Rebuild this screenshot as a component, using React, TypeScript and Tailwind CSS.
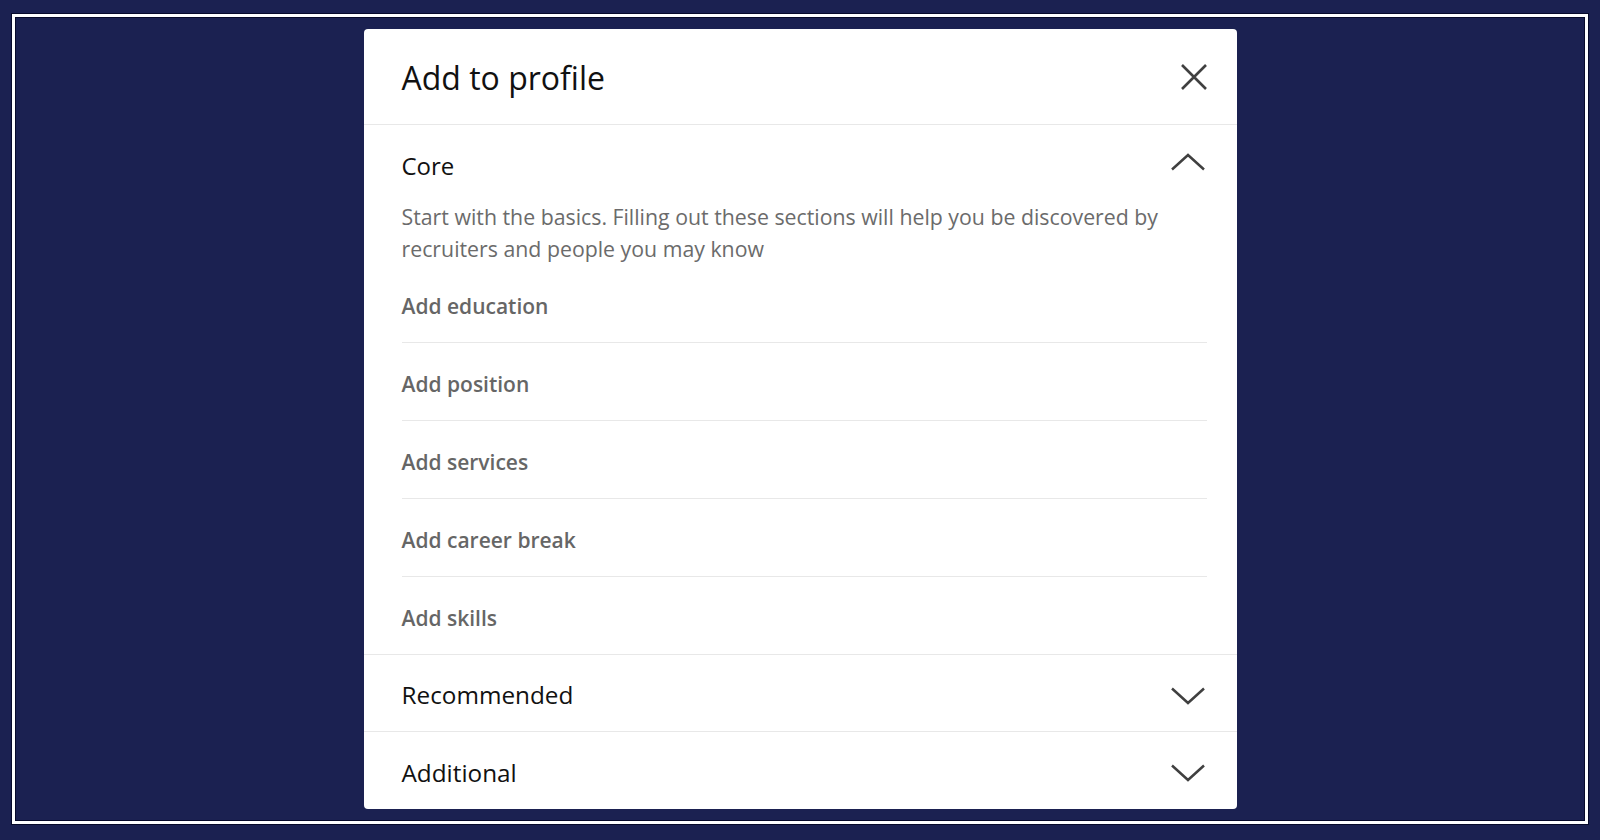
import { ReactNode } from 'react'

const coreItems = ['Add education', 'Add position', 'Add services', 'Add career break', 'Add skills']

function ChevronUp() {
  return (
    <svg width="36" height="18" viewBox="0 0 36 18" fill="none" className="text-[#404040]">
      <path d="M2 16.5 L18 2 L34 16.5" stroke="currentColor" strokeWidth="2.5" strokeLinejoin="miter" />
    </svg>
  )
}

function ChevronDown() {
  return (
    <svg width="36" height="18" viewBox="0 0 36 18" fill="none" className="text-[#404040]">
      <path d="M2 1.5 L18 16 L34 1.5" stroke="currentColor" strokeWidth="2.5" strokeLinejoin="miter" />
    </svg>
  )
}

function CloseIcon() {
  return (
    <svg width="28" height="28" viewBox="0 0 28 28" fill="none" className="text-[#404040]">
      <path d="M2 2 L26 26 M26 2 L2 26" stroke="currentColor" strokeWidth="2.6" />
    </svg>
  )
}

function SectionRow({ title, children }: { title: string; children?: ReactNode }) {
  return (
    <div className="flex h-[77px] items-center justify-between border-b border-[#e8e8e8] pl-[38px] pr-[31px] last:border-b-0">
      <span className="pt-[4px] text-[24.3px] leading-[32px] font-medium text-[#111111]">{title}</span>
      <span className="mt-[5px]">{children}</span>
    </div>
  )
}

export default function App() {
  return (
    <div
      className="flex h-[840px] w-full bg-[#1b2151] pt-[14px] pr-[12px] pb-[16px] pl-[12px]"
      style={{ fontFamily: '"Open Sans", "Noto Sans", sans-serif' }}
    >
      <div className="flex flex-1 items-center justify-center border-[3px] border-white shadow-[0_0_0_1px_#080b2b,inset_0_0_0_1px_#080b2b]">
        <div className="w-[873px] overflow-hidden rounded-[4px] bg-white">
          {/* header */}
          <div className="flex h-[96px] items-center justify-between border-b border-[#e8e8e8] pl-[38px] pr-[29px]">
            <h2 className="pt-[2px] text-[32px] leading-[40px] font-normal text-[#111111]">Add to profile</h2>
            <button className="flex items-center justify-center">
              <CloseIcon />
            </button>
          </div>

          {/* core section, expanded */}
          <div className="border-b border-[#e8e8e8] pt-[25px]">
            <div className="flex items-start justify-between pl-[38px] pr-[31px]">
              <span className="text-[24px] leading-[32px] font-medium text-[#111111]">Core</span>
              <span className="mt-[3px]">
                <ChevronUp />
              </span>
            </div>
            <p className="mt-[19px] pl-[38px] pr-[50px] text-[21.3px] leading-[32px] text-[#6b6b6b]">
              Start with the basics. Filling out these sections will help you be discovered by recruiters and people you
              may know
            </p>
            <ul className="pl-[38px] pr-[30px]">
              {coreItems.map((item) => (
                <li
                  key={item}
                  className="flex h-[78px] items-center border-b border-[#e8e8e8] pt-[4px] text-[21px] leading-[32px] font-semibold text-[#666666] last:h-[77px] last:border-b-0"
                >
                  {item}
                </li>
              ))}
            </ul>
          </div>

          <SectionRow title="Recommended">
            <ChevronDown />
          </SectionRow>
          <SectionRow title="Additional">
            <ChevronDown />
          </SectionRow>
        </div>
      </div>
    </div>
  )
}
